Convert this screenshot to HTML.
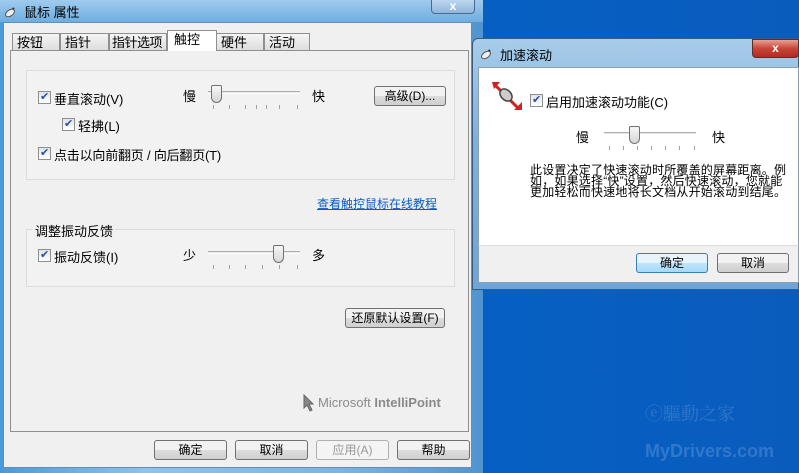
<!DOCTYPE html>
<html><head><meta charset="utf-8"><style>
*{margin:0;padding:0;box-sizing:border-box}
body{width:799px;height:473px;overflow:hidden;position:relative;background:linear-gradient(90deg,#0b5cb8,#0660c4 60%,#0a5cbc);font-family:"Liberation Sans","Noto Sans CJK SC","WenQuanYi Zen Hei",sans-serif;font-size:12px;color:#000}
.a{position:absolute}
.cb{position:absolute;width:13px;height:13px;border:1px solid #8e8f8f;background:linear-gradient(#dfe4ea,#fff);}
.cb:after{content:"✔";position:absolute;left:1px;top:-2px;font-size:11px;color:#2b4f9a}
.btn{position:absolute;height:20px;border:1px solid #707070;border-radius:3px;background:linear-gradient(#f2f2f2 50%,#dddddd 51%,#cfcfcf);text-align:center;line-height:18px;font-size:12px}
.tab{position:absolute;top:33px;height:18px;border:1px solid #8e8f8f;border-bottom:none;background:linear-gradient(#f5f5f5,#dcdcdc);padding-left:4px;line-height:17px;font-size:13px;white-space:nowrap;overflow:hidden}
.track{position:absolute;height:3px;border-top:1px solid #b0b0b0;border-bottom:1px solid #fff;background:#e6e6e6}
.thumb{position:absolute;width:11px;height:18px;border:1px solid #707070;border-radius:2px 2px 6px 6px;background:linear-gradient(#f6f6f6,#d8d8d8)}
.tick{position:absolute;width:1px;height:4px;background:#a0a0a0}
</style></head><body>
<div class="a" style="left:0;top:0;width:483px;height:473px;background:linear-gradient(90deg,#4a9ad8,#8cc4ec 30%,#7ab6e4 70%,#4f94d0);"></div>
<div class="a" style="left:0;top:0;width:483px;height:22px;background:linear-gradient(#9fcbee,#6eaee0)"></div>
<svg class="a" style="left:4px;top:4px" width="16" height="14"><path d="M2 12 L10 4" stroke="#333" stroke-width="2"/><ellipse cx="6" cy="9" rx="5" ry="3" transform="rotate(-35 6 9)" fill="#eee" stroke="#555"/></svg>
<div class="a" style="left:24px;top:2px;font-size:13px">鼠标 属性</div>
<div class="a" style="left:431px;top:0;width:44px;height:14px;border:1px solid #4a6a90;border-top:none;border-radius:0 0 4px 4px;background:linear-gradient(#bcd6ee,#8fb6dc);color:#fff;text-align:center;font-weight:bold;line-height:12px">x</div>
<div class="a" style="left:3px;top:22px;width:469px;height:446px;background:#f0f0f0;border:1px solid #6a8cb0"></div>
<div class="tab" style="left:12px;width:48px">按钮</div>
<div class="tab" style="left:60px;width:49px">指针</div>
<div class="tab" style="left:109px;width:58px;padding-left:2px;letter-spacing:-0.5px">指针选项</div>
<div class="tab" style="left:216px;width:48px">硬件</div>
<div class="tab" style="left:264px;width:46px">活动</div>
<div class="a" style="left:10px;top:50px;width:459px;height:382px;border:1px solid #8e8f8f;background:#f0f0f0"></div>
<div class="a" style="left:167px;top:30px;width:50px;height:22px;border:1px solid #8e8f8f;border-bottom:none;background:#fff;padding-left:6px;line-height:17px;font-size:13px">触控</div>
<div class="a" style="left:11px;top:51px;width:457px;height:380px;background:#f0f0f0"></div>
<div class="a" style="left:26px;top:70px;width:429px;height:110px;border:1px solid #dcdcdc;background:#f2f2f2"></div>
<div class="cb" style="left:38px;top:91px"></div><div class="a" style="left:54px;top:89px;font-size:13px">垂直滚动(V)</div>
<div class="cb" style="left:62px;top:118px"></div><div class="a" style="left:78px;top:116px;font-size:13px">轻拂(L)</div>
<div class="cb" style="left:38px;top:147px"></div><div class="a" style="left:54px;top:145px;font-size:13px;letter-spacing:-0.2px">点击以向前翻页 / 向后翻页(T)</div>
<div class="a" style="left:183px;top:86px;font-size:13px">慢</div>
<div class="a" style="left:312px;top:86px;font-size:13px">快</div>
<div class="track" style="left:208px;top:91px;width:92px"></div>
<div class="thumb" style="left:211px;top:85px"></div>
<div class="tick" style="left:213px;top:105px"></div><div class="tick" style="left:229px;top:105px"></div><div class="tick" style="left:245px;top:105px"></div><div class="tick" style="left:256px;top:105px"></div><div class="tick" style="left:266px;top:105px"></div><div class="tick" style="left:279px;top:105px"></div><div class="tick" style="left:297px;top:105px"></div>
<div class="btn" style="left:374px;top:86px;width:72px">高级(D)...</div>
<div class="a" style="left:317px;top:195px;color:#0a5bc4;text-decoration:underline;font-size:12px">查看触控鼠标在线教程</div>
<div class="a" style="left:26px;top:229px;width:429px;height:58px;border:1px solid #dcdcdc;background:#f2f2f2"></div>
<div class="a" style="left:33px;top:221px;background:#f0f0f0;padding:0 2px;font-size:13px">调整振动反馈</div>
<div class="cb" style="left:38px;top:249px"></div><div class="a" style="left:54px;top:247px;font-size:13px">振动反馈(I)</div>
<div class="a" style="left:183px;top:245px;font-size:13px">少</div>
<div class="a" style="left:312px;top:245px;font-size:13px">多</div>
<div class="track" style="left:208px;top:251px;width:92px"></div>
<div class="thumb" style="left:273px;top:245px"></div>
<div class="tick" style="left:213px;top:265px"></div><div class="tick" style="left:229px;top:265px"></div><div class="tick" style="left:245px;top:265px"></div><div class="tick" style="left:262px;top:265px"></div><div class="tick" style="left:279px;top:265px"></div><div class="tick" style="left:297px;top:265px"></div>
<div class="btn" style="left:345px;top:308px;width:100px">还原默认设置(F)</div>
<svg class="a" style="left:302px;top:394px" width="12" height="18"><path d="M2 1 L2 14 L5 11 L8 17 L10 16 L7 10 L11 10Z" fill="#888" stroke="#666"/></svg>
<div class="a" style="left:318px;top:395px;font-size:13px;color:#8a8a8a">Microsoft <b>IntelliPoint</b></div>
<div class="btn" style="left:154px;top:440px;width:73px">确定</div>
<div class="btn" style="left:235px;top:440px;width:73px">取消</div>
<div class="btn" style="left:316px;top:440px;width:73px;color:#999;border-color:#b0b0b0;background:#f4f4f4">应用(A)</div>
<div class="btn" style="left:397px;top:440px;width:73px">帮助</div>
<div class="a" style="left:472px;top:38px;width:327px;height:252px;border:1px solid #3a5a80;border-radius:6px 0 0 0;background:linear-gradient(#a8cdea,#7fb0dc 40%,#6ea5d6)"></div>
<svg class="a" style="left:480px;top:46px" width="16" height="14"><path d="M2 12 L10 4" stroke="#333" stroke-width="2"/><ellipse cx="6" cy="9" rx="5" ry="3" transform="rotate(-35 6 9)" fill="#eee" stroke="#555"/></svg>
<div class="a" style="left:500px;top:45px;font-size:13px">加速滚动</div>
<div class="a" style="left:752px;top:39px;width:47px;height:19px;border:1px solid #6a2a20;border-radius:0 0 4px 4px;background:linear-gradient(#e8a090,#c8453a 50%,#b02a20);color:#fff;text-align:center;font-weight:bold;line-height:17px">x</div>
<div class="a" style="left:478px;top:67px;width:321px;height:178px;background:#fff;border:1px solid #8aa0b8;border-bottom:none"></div>
<div class="a" style="left:478px;top:245px;width:321px;height:38px;background:#f0f0f0;border:1px solid #8aa0b8;border-top:1px solid #dcdcdc"></div>
<svg class="a" style="left:492px;top:80px" width="32" height="32"><path d="M2 4 L26 28" stroke="#d02020" stroke-width="3"/><path d="M0 2 L8 2 L2 9Z M30 30 L22 30 L30 22Z" fill="#d02020"/><ellipse cx="14" cy="15" rx="5" ry="7" transform="rotate(-45 14 15)" fill="#ccc" stroke="#444" stroke-width="1.5"/></svg>
<div class="cb" style="left:530px;top:94px"></div><div class="a" style="left:546px;top:92px;font-size:13px">启用加速滚动功能(C)</div>
<div class="a" style="left:576px;top:127px;font-size:13px">慢</div>
<div class="a" style="left:712px;top:127px;font-size:13px">快</div>
<div class="track" style="left:604px;top:132px;width:92px"></div>
<div class="thumb" style="left:629px;top:126px"></div>
<div class="tick" style="left:609px;top:146px"></div><div class="tick" style="left:623px;top:146px"></div><div class="tick" style="left:637px;top:146px"></div><div class="tick" style="left:651px;top:146px"></div><div class="tick" style="left:665px;top:146px"></div><div class="tick" style="left:679px;top:146px"></div><div class="tick" style="left:694px;top:146px"></div>
<div class="a" style="left:530px;top:165px;width:262px;line-height:11px;font-size:12px;letter-spacing:0.2px">此设置决定了快速滚动时所覆盖的屏幕距离。例如，如果选择“快”设置，然后快速滚动，您就能更加轻松而快速地将长文档从开始滚动到结尾。</div>
<div class="btn" style="left:636px;top:253px;width:72px;border-color:#3c7fb1;background:linear-gradient(#e8f4fc 50%,#bee6fd 51%,#a7d9f5)">确定</div>
<div class="btn" style="left:717px;top:253px;width:72px">取消</div>
<div class="a" style="left:645px;top:400px;font-size:18px;color:rgba(120,170,230,0.35);font-family:'Noto Serif CJK SC',serif">ⓔ驅動之家</div>
<div class="a" style="left:645px;top:441px;font-size:18px;font-weight:bold;color:rgba(120,170,230,0.35)">MyDrivers.com</div>
</body></html>
